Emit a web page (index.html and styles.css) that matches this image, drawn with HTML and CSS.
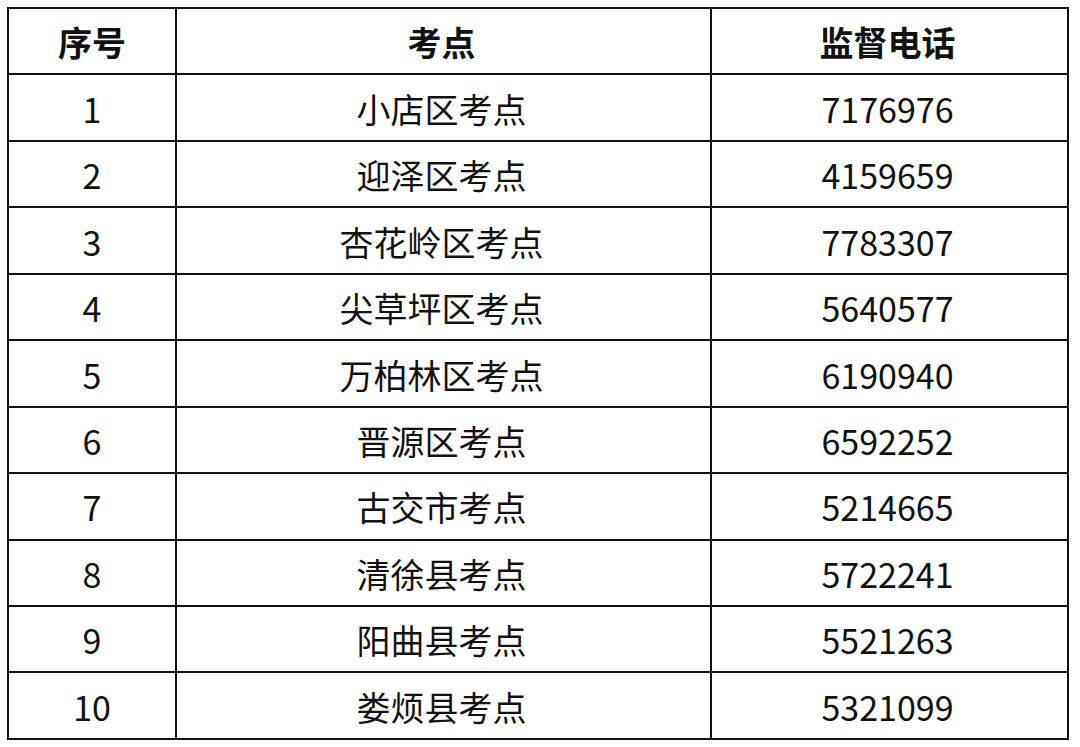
FILE: index.html
```html
<!DOCTYPE html>
<html lang="zh-CN">
<head>
<meta charset="utf-8">
<title>监督电话</title>
<link rel="stylesheet" href="styles.css">
</head>
<body>
<table class="tbl">
  <colgroup>
    <col class="c1"><col class="c2"><col class="c3">
  </colgroup>
  <thead>
    <tr><th>序号</th><th>考点</th><th>监督电话</th></tr>
  </thead>
  <tbody>
    <tr><td>1</td><td>小店区考点</td><td>7176976</td></tr>
    <tr><td>2</td><td>迎泽区考点</td><td>4159659</td></tr>
    <tr><td>3</td><td>杏花岭区考点</td><td>7783307</td></tr>
    <tr><td>4</td><td>尖草坪区考点</td><td>5640577</td></tr>
    <tr><td>5</td><td>万柏林区考点</td><td>6190940</td></tr>
    <tr><td>6</td><td>晋源区考点</td><td>6592252</td></tr>
    <tr><td>7</td><td>古交市考点</td><td>5214665</td></tr>
    <tr><td>8</td><td>清徐县考点</td><td>5722241</td></tr>
    <tr><td>9</td><td>阳曲县考点</td><td>5521263</td></tr>
    <tr><td>10</td><td>娄烦县考点</td><td>5321099</td></tr>
  </tbody>
</table>
</body>
</html>
```

FILE: styles.css
```css
html, body {
  margin: 0;
  padding: 0;
  background: #fff;
}
body {
  padding: 7px 0 0 7px;
  font-family: "Noto Sans CJK SC", "Noto Sans", sans-serif;
  color: #111;
}
.tbl {
  border-collapse: collapse;
  table-layout: fixed;
  width: 1060px;
}
.c1 { width: 168px; }
.c2 { width: 535px; }
.c3 { width: 357px; }
.tbl th,
.tbl td {
  border: 2px solid #111;
  height: 66.45px;
  padding: 3px 0 0 0;
  box-sizing: border-box;
  text-align: center;
  vertical-align: middle;
  font-size: 34px;
  line-height: 1.2;
}
.tbl th:nth-child(n+2),
.tbl td:nth-child(n+2) {
  padding-right: 4px;
}
.tbl th {
  font-weight: 700;
}
.tbl td {
  font-weight: 400;
}
```
